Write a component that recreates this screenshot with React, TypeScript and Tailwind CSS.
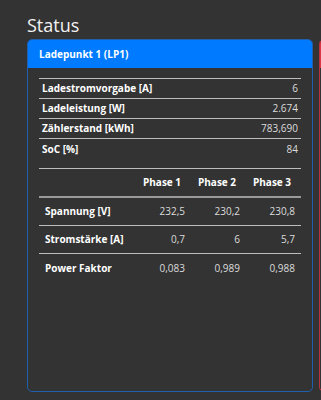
import React from 'react';

interface Row {
  label: string;
  value: string;
}

interface PhaseRow {
  label: string;
  values: string[];
}

const overview: Row[] = [
  { label: 'Ladestromvorgabe [A]', value: '6' },
  { label: 'Ladeleistung [W]', value: '2.674' },
  { label: 'Zählerstand [kWh]', value: '783,690' },
  { label: 'SoC [%]', value: '84' }
];

const phases: PhaseRow[] = [
  { label: 'Spannung [V]', values: ['232,5', '230,2', '230,8'] },
  { label: 'Stromstärke [A]', values: ['0,7', '6', '5,7'] },
  { label: 'Power Faktor', values: ['0,083', '0,989', '0,988'] }
];

const cols = 'grid grid-cols-[101px_51px_55px_55px]';

export default function App() {
  return (
    <div className="h-[400px] w-full overflow-hidden bg-[#333333] font-['Open_Sans',sans-serif] text-white">
      <h1 className="pl-[27px] pt-[12px] text-[18px] leading-[27px] font-normal text-[#f2f2f2]">Status</h1>

      <div className="flex gap-[6px] pl-[27px]">
        {/* Ladepunkt card */}
        <div className="flex h-[353px] w-[286px] shrink-0 flex-col rounded-[5px] border border-[#1f5fae]">
          <div className="flex h-[28px] items-center rounded-t-[4px] bg-[#007bff] px-[11px] text-[10px] font-bold">
            Ladepunkt 1 (LP1)
          </div>

          <div className="px-[11px] pt-[10px]">
            {/* overview table */}
            <div className="border-t border-[#bdbdbd]">
              {overview.map((r, i) => (
                <div
                  key={r.label}
                  className={`flex h-[20px] items-center justify-between px-[3px] text-[10px] ${
                    i < overview.length - 1 ? 'border-b border-[#bdbdbd]' : ''
                  }`}
                >
                  <span className="font-bold">{r.label}</span>
                  <span className="text-[#dcdcdc]">{r.value}</span>
                </div>
              ))}
            </div>

            {/* phase table */}
            <div className="mt-[9px] border-t border-[#bdbdbd] text-[10px]">
              <div className={`${cols} h-[29px] items-center border-b-2 border-[#9a9a9a] font-bold`}>
                <span />
                <span className="pl-[3px]">Phase 1</span>
                <span className="pl-[7px]">Phase 2</span>
                <span className="pl-[7px]">Phase 3</span>
              </div>
              {phases.map((r, i) => (
                <div
                  key={r.label}
                  className={`${cols} h-[28px] items-center ${
                    i < phases.length - 1 ? 'border-b border-[#bdbdbd]' : ''
                  }`}
                >
                  <span className="pl-[6px] font-bold">{r.label}</span>
                  {r.values.map((v, j) => (
                    <span key={j} className="pr-[6px] text-right text-[#dcdcdc]">
                      {v}
                    </span>
                  ))}
                </div>
              ))}
            </div>
          </div>
        </div>

        {/* next card, cut off */}
        <div className="flex h-[353px] w-[286px] shrink-0 flex-col rounded-[5px] border border-[#b8323f]">
          <div className="h-[28px] rounded-t-[4px] bg-[#dc3545]" />
        </div>
      </div>
    </div>
  );
}
